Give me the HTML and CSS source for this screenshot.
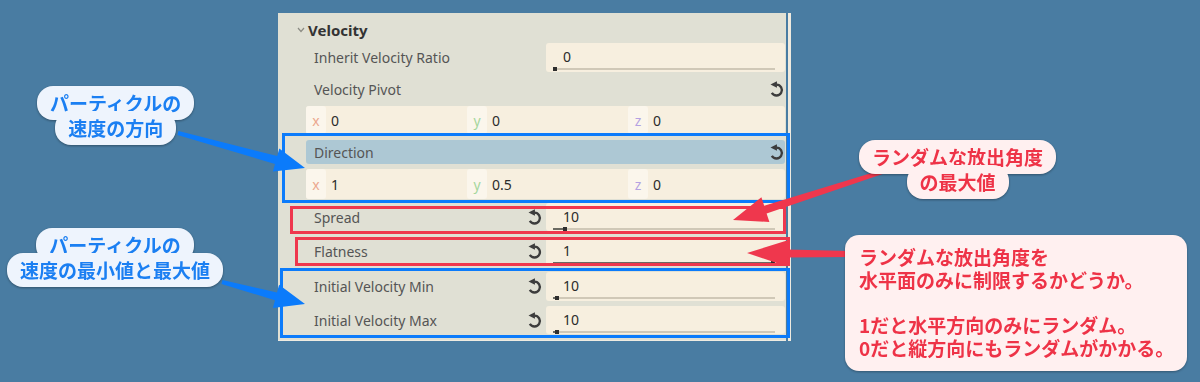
FILE: index.html
```html
<!DOCTYPE html>
<html lang="ja">
<head>
    <meta charset="UTF-8">
    <title>Velocity</title>
    <link rel="stylesheet" href="styles.css">
</head>
<body>
<div class="stage">
    <div class="inspector">
        <div class="panel">
            <div class="section">
                <svg class="chevron" viewBox="0 0 8 6"><polyline points="1,1 4,4.5 7,1"/></svg>
                <span>Velocity</span>
            </div>

            <div class="row r-inherit">
                <div class="name">Inherit Velocity Ratio</div>
                <div class="field">
                    <div class="value">0</div>
                    <div class="track"><i class="fill" style="width:0px"></i><i class="knob"></i></div>
                </div>
            </div>

            <div class="row r-pivot">
                <div class="name">Velocity Pivot</div>
                <svg class="revert" viewBox="0 0 14 14"><path d="M7 2.4 A5.1 5.1 0 1 1 2.6 10.2"/><polygon points="1.4,2.4 7.4,-0.6 7.4,5.4"/></svg>
            </div>

            <div class="row vec r-vec1">
                <div class="axis"><b class="ax-x">x</b><span>0</span></div>
                <div class="axis"><b class="ax-y">y</b><span>0</span></div>
                <div class="axis"><b class="ax-z">z</b><span>0</span></div>
            </div>

            <div class="row r-dir">
                <div class="name">Direction</div>
                <svg class="revert" viewBox="0 0 14 14"><path d="M7 2.4 A5.1 5.1 0 1 1 2.6 10.2"/><polygon points="1.4,2.4 7.4,-0.6 7.4,5.4"/></svg>
            </div>

            <div class="row vec r-vec2">
                <div class="axis"><b class="ax-x">x</b><span>1</span></div>
                <div class="axis"><b class="ax-y">y</b><span>0.5</span></div>
                <div class="axis"><b class="ax-z">z</b><span>0</span></div>
            </div>

            <div class="row r-spread">
                <div class="name">Spread</div>
                <svg class="revert gap" viewBox="0 0 14 14"><path d="M7 2.4 A5.1 5.1 0 1 1 2.6 10.2"/><polygon points="1.4,2.4 7.4,-0.6 7.4,5.4"/></svg>
                <div class="field">
                    <div class="value">10</div>
                    <div class="track"><i class="fill" style="width:10px"></i><i class="knob"></i></div>
                </div>
            </div>

            <div class="row r-flat">
                <div class="name">Flatness</div>
                <svg class="revert gap" viewBox="0 0 14 14"><path d="M7 2.4 A5.1 5.1 0 1 1 2.6 10.2"/><polygon points="1.4,2.4 7.4,-0.6 7.4,5.4"/></svg>
                <div class="field">
                    <div class="value">1</div>
                    <div class="track"><i class="fill" style="width:218px"></i><i class="knob"></i></div>
                </div>
            </div>

            <div class="row r-min">
                <div class="name">Initial Velocity Min</div>
                <svg class="revert gap" viewBox="0 0 14 14"><path d="M7 2.4 A5.1 5.1 0 1 1 2.6 10.2"/><polygon points="1.4,2.4 7.4,-0.6 7.4,5.4"/></svg>
                <div class="field">
                    <div class="value">10</div>
                    <div class="track"><i class="fill" style="width:2px"></i><i class="knob"></i></div>
                </div>
            </div>

            <div class="row r-max">
                <div class="name">Initial Velocity Max</div>
                <svg class="revert gap" viewBox="0 0 14 14"><path d="M7 2.4 A5.1 5.1 0 1 1 2.6 10.2"/><polygon points="1.4,2.4 7.4,-0.6 7.4,5.4"/></svg>
                <div class="field">
                    <div class="value">10</div>
                    <div class="track"><i class="fill" style="width:2px"></i><i class="knob"></i></div>
                </div>
            </div>
        </div>
        <div class="scroll"></div>
    </div>

    <!-- annotation frames and arrows -->
    <svg class="marks" viewBox="0 0 1200 382">
        <rect class="frame-blue" x="283.5" y="134.5" width="505" height="67"/>
        <rect class="frame-red" x="291.5" y="207.5" width="493" height="25"/>
        <rect class="frame-red" x="296.5" y="238.5" width="492" height="26"/>
        <rect class="frame-blue" x="281.5" y="269.5" width="507" height="67"/>
        <polygon class="arrow-blue" points="178.5,131.1 277.2,156.1 279.3,148.4 305,168 272.9,171.6 275,163.9 177.5,134.9"/>
        <polygon class="arrow-blue" points="222.5,280.1 277,292.4 279.1,284.7 305,304 272.9,307.9 275,300.2 221.5,283.9"/>
        <polygon class="arrow-red" points="881.4,170.1 764.2,205.8 761.4,197.2 733,220 769.4,222 766.6,213.4 882.6,173.9"/>
        <polygon class="arrow-red" points="850,251 787,249.4 787,240.4 747,253 787,266.4 787,257.4 850,257"/>
    </svg>

    <div class="bubble blue b-dir"><span>パーティクルの</span><span>速度の方向</span></div>
    <div class="bubble blue b-speed"><span>パーティクルの</span><span>速度の最小値と最大値</span></div>
    <div class="bubble red b-spread"><span>ランダムな放出角度</span><span>の最大値</span></div>
    <div class="note">
        <p>ランダムな放出角度を<br>水平面のみに制限するかどうか。</p>
        <p>1だと水平方向のみにランダム。<br>0だと縦方向にもランダムがかかる。</p>
    </div>
</div>
</body>
</html>
```

FILE: styles.css
```css
* {
    box-sizing: border-box;
}
body {
    margin: 0;
    background: #497ca2;
    font-family: "Noto Sans", sans-serif;
}
.stage {
    position: relative;
    width: 1200px;
    height: 382px;
    overflow: hidden;
    padding: 13px 0 0 278px;
}
.inspector {
    display: flex;
    align-items: flex-start;
}
.panel {
    display: flex;
    flex-direction: column;
    width: 508px;
    height: 328px;
    padding-right: 1px;
    background: #e0e0d4;
    border-bottom: 1px solid #efebe1;
}
.scroll {
    width: 3px;
    height: 328px;
    margin-left: 2px;
    background: #efeadf;
}

/* section header */
.section {
    display: flex;
    align-items: center;
    height: 30px;
    padding: 4px 0 0 19px;
    font-size: 15px;
    font-weight: 700;
    color: #333;
}
.chevron {
    width: 8px;
    height: 6px;
    margin-right: 3px;
    fill: none;
    stroke: #8c8c84;
    stroke-width: 1.2;
}

/* property rows */
.row {
    display: flex;
    align-items: center;
    margin-left: 28px;
}
.name {
    flex: 1;
    padding-left: 8px;
    font-size: 14px;
    color: #555;
}
.revert {
    flex-shrink: 0;
    width: 15px;
    height: 15px;
    overflow: visible;
    fill: #3c3c3c;
}
.revert path {
    fill: none;
    stroke: #3c3c3c;
    stroke-width: 2.2;
}
.revert.gap {
    margin-right: 4px;
}
.r-inherit { height: 29px; }
.r-pivot { height: 30px; margin-top: 2px; }
.r-vec1 { height: 28px; margin-top: 2px; }
.r-dir { height: 24px; margin-top: 6px; }
.r-vec2 { height: 30px; margin-top: 5px; }
.r-spread { height: 28px; margin-top: 4px; }
.r-flat { height: 29px; margin-top: 6px; }
.r-min { height: 29px; margin-top: 6px; }
.r-max { height: 28px; margin-top: 5px; }
.r-pivot .revert,
.r-dir .revert {
    margin-right: 1px;
}
.r-dir {
    background: #adc8d4;
    border-radius: 3px;
}

/* slider field */
.field {
    display: flex;
    flex-direction: column;
    align-self: stretch;
    width: 239px;
    padding-top: 4px;
    background: #f7efdf;
    border-radius: 3px;
}
.value {
    padding-left: 17px;
    line-height: 20px;
    font-size: 14px;
    color: #2b2b2b;
}
.track {
    display: flex;
    align-items: center;
    height: 2px;
    margin: 1px 10px 0 7px;
    background: #d0c8b7;
}
.fill {
    height: 2px;
    background: #6b6a62;
}
.knob {
    flex-shrink: 0;
    width: 4px;
    height: 4px;
    background: #2e2e2e;
}

/* vector rows */
.vec {
    align-items: stretch;
    background: #f7efdf;
    border-radius: 3px;
}
.axis {
    display: flex;
    align-items: center;
    width: 161px;
    font-size: 14px;
    color: #2b2b2b;
}
.axis:last-child {
    flex: 1;
}
.axis b {
    display: flex;
    align-items: center;
    justify-content: center;
    align-self: stretch;
    width: 20px;
    font-weight: 400;
    background: #fbf6ec;
    border-radius: 3px;
}
.axis span {
    padding-left: 5px;
}
.ax-x { color: #eba88e; }
.ax-y { color: #a6d79d; }
.ax-z { color: #b4a2e2; }

/* annotations */
.marks {
    position: absolute;
    left: 0;
    top: 0;
    width: 1200px;
    height: 382px;
}
.frame-blue {
    fill: none;
    stroke: #0b7bfb;
    stroke-width: 3;
}
.frame-red {
    fill: none;
    stroke: #ef374d;
    stroke-width: 3;
}
.arrow-blue { fill: #0b7bfb; }
.arrow-red { fill: #ef374d; }

.bubble {
    position: absolute;
    display: flex;
    flex-direction: column;
    align-items: center;
    font-family: "Noto Sans CJK JP", sans-serif;
    font-size: 19px;
    font-weight: 700;
    filter: drop-shadow(0 1px 1px rgba(0, 0, 0, 0.35));
}
.bubble span {
    display: block;
    padding: 3px 13px;
    line-height: 28px;
    white-space: nowrap;
    border-radius: 16px;
}
.bubble span + span {
    margin-top: -9px;
}
.blue { color: #1b7ff2; }
.blue span { background: #eef4fd; }
.red { color: #ee3347; }
.red span { background: #fff0f0; }
.b-dir { left: 37px; top: 86px; }
.b-speed { left: 7px; top: 228px; }
.b-spread { left: 859px; top: 140px; }

.note {
    position: absolute;
    left: 845px;
    top: 235px;
    width: 342px;
    height: 136px;
    padding: 10px 14px;
    border-radius: 14px;
    background: #fff0f0;
    color: #ee3347;
    font-family: "Noto Sans CJK JP", sans-serif;
    font-size: 19px;
    font-weight: 700;
    line-height: 23px;
    white-space: nowrap;
    filter: drop-shadow(0 1px 1px rgba(0, 0, 0, 0.3));
}
.note p {
    margin: 0;
}
.note p + p {
    margin-top: 22px;
}
```
